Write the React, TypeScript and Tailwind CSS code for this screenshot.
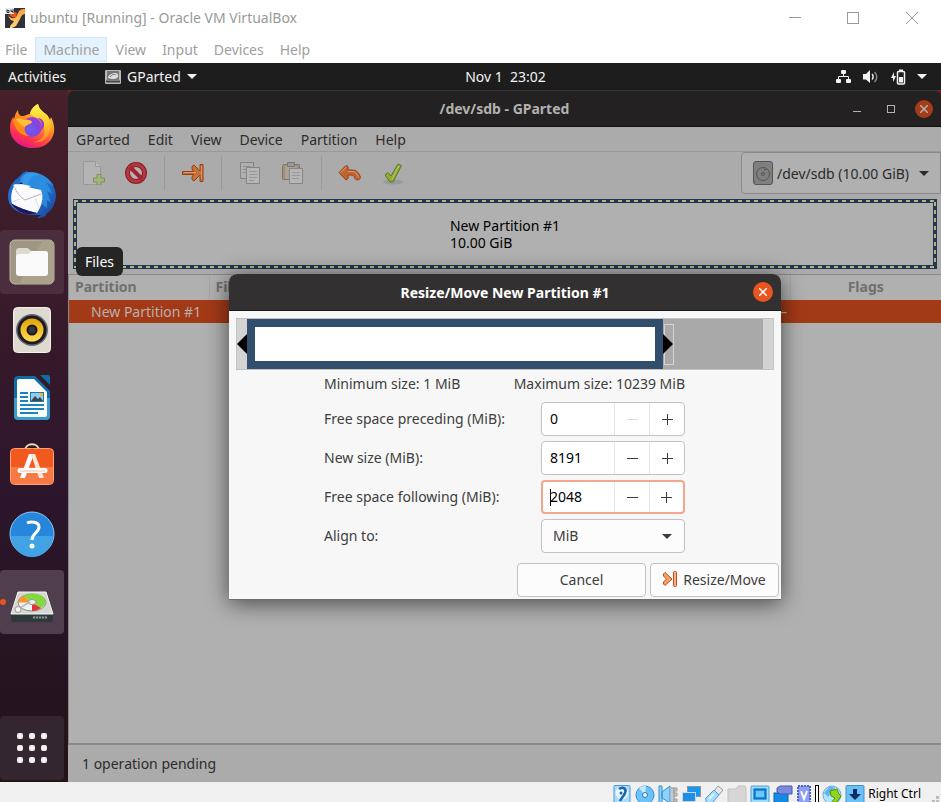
import type { ReactNode } from "react";

const SANS = "font-['Noto_Sans','Open_Sans',sans-serif]";

/* ---------- Host window ---------- */

function VirtualBoxLogo() {
  return (
    <svg width="20" height="20" viewBox="0 0 20 20" aria-hidden="true">
      <defs>
        <linearGradient id="vb" x1="0" y1="0" x2="0" y2="1">
          <stop offset="0" stopColor="#ff9a3c" />
          <stop offset="1" stopColor="#ffd978" />
        </linearGradient>
      </defs>
      <rect width="20" height="20" fill="#2f323b" />
      <path d="M3 7c3 4 5 4 8 2l3-6c2-2 4-2 6-2v5c-3 0-4 3-5 5l-4 7-4 2H5c0-4 3-4 4-7-3 0-5-3-6-6Z" fill="url(#vb)" />
      <path d="M4 6c2 3 4 4 7 3l1-4-2-1Z" fill="#f0521e" />
      <rect width="9" height="6" fill="#e9eaec" />
      <path d="M2 1.500v3h2v-2H2M6 1.500v2h2M8 1v4" stroke="#333" fill="none" />
    </svg>
  );
}

function HostTitleBar() {
  return (
    <header className="flex h-[37px] items-center bg-white pb-px pl-[5px] text-[#999]">
      <VirtualBoxLogo />
      <h1 className="ml-[5px] flex-1 text-[14px] leading-5">ubuntu [Running] - Oracle VM VirtualBox</h1>
      <div className="flex h-full">
        <button aria-label="Minimize" className="grid w-[58px] place-items-center">
          <svg width="12" height="12" stroke="#999"><path d="M0 5.500h12" /></svg>
        </button>
        <button aria-label="Maximize" className="grid w-[58px] place-items-center">
          <svg width="12" height="12" stroke="#999" fill="none"><rect x=".5" y=".5" width="11" height="11" /></svg>
        </button>
        <button aria-label="Close" className="grid w-[59px] place-items-center">
          <svg width="12" height="12" stroke="#999"><path d="M0 0l12 12M12 0L0 12" /></svg>
        </button>
      </div>
    </header>
  );
}

function HostMenu() {
  const items = ["File", "Machine", "View", "Input", "Devices", "Help"];
  return (
    <nav className="flex h-[26px] bg-white pb-px text-[14px] text-[#a0a0a0]">
      {items.map((item, i) => (
        <button
          key={item}
          className={
            i === 0
              ? "pr-[8px] pl-[5px]"
              : item === "Machine"
                ? "border border-[#cce8ff] bg-[#e5f3ff] px-[7px]"
                : "px-[8px]"
          }
        >
          {item}
        </button>
      ))}
    </nav>
  );
}

/* ---------- GNOME top panel ---------- */

function TopPanel() {
  return (
    <div className="grid h-[27px] grid-cols-3 items-center bg-[#1d1d1d] text-[14px] text-[#f2f2f2]">
      <div className="flex items-center pl-2">
        <button className="w-[97px] text-left">Activities</button>
        <button className="flex items-center gap-[6px]">
          <svg width="16" height="14" viewBox="0 0 16 14" aria-hidden="true">
            <rect width="16" height="14" rx="1" fill="#b9b9b9" />
            <rect x="2" y="1" width="12" height="9" fill="#777" />
            <path d="M3 8c0-4 9-7 10-3s-5 5-10 3Z" fill="#ddd" />
            <path d="M5 7c2-3 5-3 6-2" stroke="#777" fill="none" />
            <path d="M1 11.500h14" stroke="#444" strokeWidth="2" />
          </svg>
          GParted
          <svg width="10" height="5" fill="#f2f2f2" aria-hidden="true"><path d="M0 0h10L5 5Z" /></svg>
        </button>
      </div>
      <button className="justify-self-center pl-[70px] whitespace-pre">Nov 1  23:02</button>
      <div className="flex items-center justify-end gap-[11px] pr-[14px]">
        <svg width="16" height="14" fill="#f2f2f2" aria-label="Network">
          <rect x="5" y="0" width="5" height="4" rx="1" />
          <rect x="0" y="9" width="5" height="4" rx="1" />
          <rect x="10" y="9" width="5" height="4" rx="1" />
          <path d="M7.500 4v3M2.500 9V6.500h10V9" fill="none" stroke="#f2f2f2" />
        </svg>
        <svg width="16" height="14" fill="#f2f2f2" aria-label="Volume">
          <path d="M0 4h3l4-4v13L3 9.500H0Z" />
          <path d="M9 4c1.500 1.500 1.500 4 0 5.500" fill="none" stroke="#f2f2f2" strokeWidth="1.500" />
          <path d="M11.500 2c3 3 3 7 0 10" fill="none" stroke="#8a8a8a" strokeWidth="1.500" />
        </svg>
        <svg width="16" height="16" fill="#f2f2f2" aria-label="Battery">
          <path d="M4 3L1 9h2v4l3-6H4Z" />
          <rect x="7.500" y="2.500" width="7" height="12.500" rx="1" fill="none" stroke="#f2f2f2" strokeWidth="1.500" />
          <rect x="9" y="0.500" width="4" height="2" />
          <rect x="9" y="8" width="4" height="5.500" />
        </svg>
        <svg width="10" height="5" fill="#f2f2f2" aria-label="System menu"><path d="M0 0h10L5 5Z" /></svg>
      </div>
    </div>
  );
}

/* ---------- Dock icons ---------- */

function Firefox() {
  return (
    <svg width="48" height="48" viewBox="0 0 48 48" aria-hidden="true">
      <defs>
        <linearGradient id="fxBody" x1=".8" y1="0" x2=".3" y2="1">
          <stop offset="0" stopColor="#fff44f" />
          <stop offset=".4" stopColor="#ff9a1f" />
          <stop offset=".75" stopColor="#ff3a4a" />
          <stop offset="1" stopColor="#e3138a" />
        </linearGradient>
        <linearGradient id="fxTail" x1=".5" y1="0" x2=".6" y2="1">
          <stop offset="0" stopColor="#fff34d" />
          <stop offset=".6" stopColor="#ffc226" />
          <stop offset="1" stopColor="#ff7a2e" />
        </linearGradient>
        <radialGradient id="fxGlobe" cx=".4" cy=".6" r=".7">
          <stop offset="0" stopColor="#6a5cf5" />
          <stop offset=".6" stopColor="#8046e0" />
          <stop offset="1" stopColor="#b833d8" />
        </radialGradient>
      </defs>
      <path d="M10 8c0 3 1 5 3 6h3c2-1 4-2 6-2 1-5 4-8 8-10 1 5 5 8 9 11 1 1 2 3 3 5l1-3c3 6 5 14 1 21-4 7-11 10-19 10C12 46 2 38 2 26c0-4 1-8 3-11l1 2c1-4 2-7 4-9Z" fill="url(#fxBody)" />
      <path d="M22 12c1-5 4-8 8-10 1 5 5 8 9 11 5 6 5 16 0 22-4 5-10 6-14 5 9-1 13-7 11-15-2-7-8-9-14-13Z" fill="url(#fxTail)" />
      <circle cx="24" cy="25" r="10" fill="url(#fxGlobe)" />
      <path d="M5 18c3-4 8-3 12-1 3 1 6 1 7 3 0 2-6 3-7 5-1 3 0 6 4 9-8 0-14-6-16-16Z" fill="#ff8a16" />
      <path d="M8 17c3-1 6 0 9 1 3 0 6 0 7 2-1 2-6 2-7 5-3-1-7-4-9-8Z" fill="#ffbd3a" />
      <path d="M29 16c5 2 6 8 4 12 3-1 4-6 2-9-1-2-3-3-6-3Z" fill="#8e3ae0" />
    </svg>
  );
}

function Thunderbird() {
  return (
    <svg width="50" height="50" viewBox="0 0 50 50" aria-hidden="true">
      <defs>
        <linearGradient id="tb" x1="0" y1="0" x2="1" y2="1">
          <stop offset="0" stopColor="#1b62c4" />
          <stop offset=".5" stopColor="#2478d8" />
          <stop offset="1" stopColor="#1c3f94" />
        </linearGradient>
      </defs>
      <path d="M12 8c3-4 6-6 9-6l-2 2c14-3 30 7 30 24-1 8-5 14-10 17 1 2-3 4-9 4l4-3C17 47 1 42 1 27 1 19 6 12 12 8Z" fill="url(#tb)" />
      <path d="M20 3c12-1 22 5 27 14l-8-4 7 12-6-3 4 12-4-3v8l-5-4c2-12-2-17-17-18-5-5-2-10 2-14Z" fill="#2d92e4" opacity=".8" />
      <path d="M14 8c5-5 13-6 19-2-8 0-10 3-12 9l-10 5Z" fill="#43a8ee" opacity=".5" />
      <path d="M8 15l26 6c3 8 1 15-4 23-11-3-18-5-25-9 -2-8 0-14 3-20Z" fill="#fbfbfd" />
      <path d="M8 15c-1 6 4 12 10 16l16-6" fill="none" stroke="#aeb3bc" />
      <path d="M13 30l-8 3M28 29l4 10" stroke="#dcdfe6" />
      <path d="M4 34c8 5 14 7 26 10-9 3-20 0-26-10Z" fill="#1d1761" />
      <circle cx="14" cy="15" r="1.500" fill="#10203f" />
      <path d="M6 16l6 7 12-6-10-2Z" fill="#fff" />
    </svg>
  );
}

function Files() {
  return (
    <svg width="46" height="46" viewBox="0 0 46 46" aria-hidden="true">
      <rect x="1" y="1" width="44" height="44" rx="5" fill="#9f9783" stroke="#c2bba6" />
      <path d="M34 1h6a5 5 0 0 1 5 5v34a5 5 0 0 1-5 5H10Z" fill="#aaa28c" />
      <path d="M7 34V12a3 3 0 0 1 3-3h8c2 0 3 3 5 3h13a3 3 0 0 1 3 3v19Z" fill="#dfdad1" />
      <path d="M7 18a3 3 0 0 1 3-3h9l4-3h13a3 3 0 0 1 3 3v19a3 3 0 0 1-3 3H10a3 3 0 0 1-3-3Z" fill="#fafafa" />
    </svg>
  );
}

function Rhythmbox() {
  return (
    <svg width="38" height="46" viewBox="0 0 38 46" aria-hidden="true">
      <defs>
        <linearGradient id="rb" x1="0" y1="0" x2="0" y2="1">
          <stop offset="0" stopColor="#e0a500" />
          <stop offset="1" stopColor="#ffdc55" />
        </linearGradient>
      </defs>
      <rect x=".5" y=".5" width="37" height="45" rx="4" fill="#dfdad0" stroke="#f5f2ea" />
      <circle cx="19" cy="23" r="16" fill="#6b6b70" />
      <circle cx="19" cy="23" r="14.500" fill="#1a1b26" />
      <circle cx="19" cy="23" r="11.500" fill="url(#rb)" />
      <circle cx="19" cy="23" r="5.500" fill="#17171b" />
      <circle cx="19" cy="23" r="3.500" fill="#34353a" />
    </svg>
  );
}

function Writer() {
  return (
    <svg width="38" height="46" viewBox="0 0 38 46" aria-hidden="true">
      <path d="M5 1h17l15 15v25a4 4 0 0 1-4 4H5a4 4 0 0 1-4-4V5a4 4 0 0 1 4-4Z" fill="#0f6ca5" />
      <path d="M1 23h36v18a4 4 0 0 1-4 4H5a4 4 0 0 1-4-4Z" fill="#3a9ccb" />
      <path d="M6 4h15l13 13v23a2 2 0 0 1-2 2H6a2 2 0 0 1-2-2V6a2 2 0 0 1 2-2Z" fill="#fcfcfc" />
      <path d="M27 0h8a2 2 0 0 1 2 2v8Z" fill="#0f6ca5" />
      <path d="M7 18h8M7 22h8M7 26h8M7 30h24M7 34h24M7 38h18" stroke="#1a84bd" strokeWidth="2" />
      <rect x="17.500" y="17.500" width="13" height="9" fill="#8fcdf0" stroke="#1b79b0" />
      <path d="M18 26l4-5 3 3 2-2 3 4Z" fill="#444" />
      <rect x="27" y="18" width="3" height="3" fill="#f5b81c" />
    </svg>
  );
}

function Software() {
  return (
    <svg width="46" height="52" viewBox="0 0 46 52" aria-hidden="true">
      <path d="M16 11c0-9 14-9 14 0" fill="none" stroke="#f5dcae" strokeWidth="2" />
      <rect x="1.500" y="8.500" width="43" height="36" rx="4" fill="#f1591f" stroke="#ffa27a" />
      <path d="M2 27h42v13a4 4 0 0 1-4 4H6a4 4 0 0 1-4-4Z" fill="#f67a45" />
      <path d="M20 14h5l-9 24h-5Z" fill="#fff" />
      <path d="M22 14h4l9 24h-5Z" fill="#fde4d9" />
      <path d="M11 30.500h25" stroke="#fff" strokeWidth="5" strokeLinecap="round" />
      <path d="M11 31h25" stroke="#f6b9a2" />
    </svg>
  );
}

function Help() {
  return (
    <svg width="46" height="46" viewBox="0 0 46 46" aria-hidden="true">
      <circle cx="23" cy="23" r="22" fill="#2686db" stroke="#8ecbf4" />
      <path d="M2 25h42a21 21 0 0 1-42 0Z" fill="#41a2e4" />
      <path d="M18 12c3-1.500 12-2 12 4 0 6-7 6-7 13" fill="none" stroke="#fff" strokeWidth="3" />
      <circle cx="23" cy="35" r="2.500" fill="#fff" />
    </svg>
  );
}

function GPartedIcon() {
  return (
    <svg width="44" height="42" viewBox="0 -9 44 42" aria-hidden="true">
      <path d="M1 24h42v5a3 3 0 0 1-3 3H4a3 3 0 0 1-3-3Z" fill="#2e3a3a" />
      <path d="M8 2h28l7 22H1Z" fill="#d6d6d3" stroke="#f6f6f4" />
      <ellipse cx="22" cy="12.500" rx="14" ry="8.500" fill="#f2f2f2" stroke="#8c8c8c" />
      <path d="M22 12.500L13 6c7-4 22-3 22.500 6 0 3-2 4-4.500 6Z" fill="#82d93c" />
      <path d="M22 12.500L13 6c-3 2-5 4-5 6.500Z" fill="#f5952b" />
      <path d="M22 12.500l9 5.500c-3 2-6 3-9 3Z" fill="#e33434" />
      <ellipse cx="22" cy="12" rx="4" ry="2.500" fill="#eee" stroke="#9a9a9a" />
      <path d="M8 19l12-7" stroke="#bbb" strokeWidth="2" />
      <circle cx="8" cy="19.500" r="3" fill="#f5f5f5" stroke="#999" />
      <path d="M23 27.500h15" stroke="#8ea0a0" strokeWidth="2" strokeDasharray="2 1" />
    </svg>
  );
}

function DockItem({ label, bg = "", children }: { label: string; bg?: string; children: ReactNode }) {
  return (
    <button aria-label={label} className={`relative grid h-16 w-16 place-items-center rounded-[4px] ${bg}`}>
      {children}
    </button>
  );
}

function Dock() {
  return (
    <aside className="flex w-[68px] shrink-0 flex-col gap-1 bg-linear-to-b from-[#46202a] via-[#2c152b] via-60% to-[#221419] pt-1 pb-[2px]">
      <DockItem label="Firefox"><Firefox /></DockItem>
      <DockItem label="Thunderbird"><Thunderbird /></DockItem>
      <DockItem label="Files" bg="bg-[#4b2e3d]">
        <Files />
        <span className="absolute top-[17px] left-[76px] z-20 h-[29px] w-[47px] rounded-[6px] bg-[#252525] text-center text-[14px] leading-[29px] text-white">
          Files
        </span>
      </DockItem>
      <DockItem label="Rhythmbox"><Rhythmbox /></DockItem>
      <DockItem label="LibreOffice Writer"><Writer /></DockItem>
      <DockItem label="Ubuntu Software"><Software /></DockItem>
      <DockItem label="Help"><Help /></DockItem>
      <DockItem label="GParted" bg="bg-[#503e4e]">
        <GPartedIcon />
        <span className="absolute top-[29px] left-0 h-[6px] w-[6px] rounded-full bg-[#e95420]" />
      </DockItem>
      <button aria-label="Show Applications" className="mt-auto grid h-16 w-16 place-items-center rounded-[4px] bg-[#34262e]">
        <span className="grid grid-cols-3 gap-[6px]">
          {Array.from({ length: 9 }, (_, i) => (
            <span key={i} className="h-[6px] w-[6px] rounded-[2px] bg-[#f2f0f0]" />
          ))}
        </span>
      </button>
    </aside>
  );
}

/* ---------- GParted window ---------- */

function CloseX({ color }: { color: string }) {
  return (
    <svg width="8" height="8" stroke={color} strokeWidth="1.500" aria-hidden="true"><path d="M0 0l8 8M8 0L0 8" /></svg>
  );
}

function MainTitleBar() {
  return (
    <div className="bg-[#8a1a1c]">
      <div className="grid h-[37px] grid-cols-[1fr_auto_1fr] items-center rounded-t-[6px] border-t border-b border-t-[#353334] border-b-[#120f10] bg-[#242122] text-[#b3b1ae]">
        <span />
        <h2 className="text-[14px] font-bold">/dev/sdb - GParted</h2>
        <div className="flex items-center justify-end gap-[14px] pr-2">
          <button aria-label="Minimize" className="grid h-5 w-5 place-items-center">
            <svg width="8" height="8" stroke="#b3b1ae"><path d="M0 6.500h8" /></svg>
          </button>
          <button aria-label="Maximize" className="grid h-5 w-5 place-items-center">
            <svg width="8" height="8" stroke="#b3b1ae" fill="none"><rect x=".5" y=".5" width="7" height="7" /></svg>
          </button>
          <button aria-label="Close" className="grid h-[18px] w-[18px] place-items-center rounded-full bg-[#a53c18]">
            <CloseX color="#b3b1ae" />
          </button>
        </div>
      </div>
    </div>
  );
}

function MainMenu() {
  return (
    <nav className="flex h-[25px] items-center gap-[18px] border-b border-[#999] pl-2 text-[14px] text-[#2b2b2b]">
      {["GParted", "Edit", "View", "Device", "Partition", "Help"].map((item) => (
        <button key={item}>{item}</button>
      ))}
    </nav>
  );
}

function Separator() {
  return (
    <span className="flex w-[13px] justify-center"><span className="h-[34px] w-px bg-[#999]" /></span>
  );
}

function Tool({ label, children }: { label: string; children: ReactNode }) {
  return (
    <button aria-label={label} className="grid w-[42px] place-items-center">
      <svg width="24" height="24" viewBox="0 0 24 24" aria-hidden="true">{children}</svg>
    </button>
  );
}

function Toolbar() {
  return (
    <div className="flex h-[47px] justify-between pl-1">
      <div className="flex h-[42px] items-center gap-px">
        <Tool label="New">
          <path d="M2.500.5h12l5 5v18h-17Z" fill="#b4b4b4" stroke="#989898" />
          <path d="M14.500.5v5h5" fill="#bdbdbd" stroke="#989898" />
          <path d="M16 13.500h4v3.500h3.500v4H20v3h-4v-3h-3.500v-4H16Z" fill="#a4b57c" stroke="#7d915a" />
        </Tool>
        <Tool label="Delete">
          <circle cx="12" cy="12" r="8.500" fill="#b5b5b5" stroke="#8c1a26" strokeWidth="5" />
          <circle cx="12" cy="12" r="8.500" fill="none" stroke="#b03a40" strokeWidth="3" />
          <path d="M6 6l12 12" stroke="#a3232f" strokeWidth="4" />
        </Tool>
        <Separator />
        <Tool label="Resize/Move">
          <path d="M1.500 10.500h11L11 8V5.500L13 4l6 6V3.500h3v17h-3V14l-6 6-2-1.500V16l1.500-2.500h-11Z" fill="#c5713a" stroke="#9c3d12" strokeLinejoin="round" />
          <path d="M3 11.500h12M20.500 5v13" stroke="#dc9a63" />
        </Tool>
        <Separator />
        <Tool label="Copy">
          <path d="M2.500 1.500h13v16h-13Z" fill="#b0b0b0" stroke="#858585" />
          <path d="M5 5.500h8M5 8.500h8M5 11.500h4" stroke="#8f8f8f" />
          <path d="M8.500 6.500h13v16h-13Z" fill="#b6b6b6" stroke="#858585" />
          <path d="M11 10.500h8M11 13.500h8M11 16.500h8M11 19.500h5" stroke="#979797" />
        </Tool>
        <Tool label="Paste">
          <rect x="1.500" y="3.500" width="17" height="15" rx="1" fill="#a08f78" stroke="#857660" />
          <rect x="4" y="5" width="12" height="13" fill="#aaa197" />
          <path d="M6.500 1.500h7v4h-7Z" fill="#989898" stroke="#767676" />
          <path d="M8.500 7.500h13v15h-13Z" fill="#b6b6b6" stroke="#858585" />
          <path d="M11 11.500h8M11 14.500h8M11 17.500h7" stroke="#979797" />
        </Tool>
        <Separator />
        <Tool label="Undo">
          <path d="M1 11.500l7-7 2 1v3.500h4c5 0 7 3 8.500 7.500-1 3-4 3-5.500 1-1-3-2-3.500-4-3.500h-3v3.500l-2 1.500Z" fill="#bf6433" stroke="#9c3d12" strokeLinejoin="round" />
          <path d="M2.500 11.500l6-5.500M10 10.500h4c3 0 5 2 6.500 6" stroke="#dc9a63" fill="none" />
        </Tool>
        <Tool label="Apply">
          <ellipse cx="12" cy="21" rx="10" ry="2.500" fill="#999" />
          <path d="M4 14l3-2.500 3 3.500L17 3l3.500 1.500L12 21H9Z" fill="#93a936" stroke="#587a1c" strokeLinejoin="round" />
          <path d="M18 4.500l-7 14" stroke="#b4c865" />
        </Tool>
      </div>
      <label className="flex h-[42px] w-[200px] items-center rounded-l-[4px] border border-[#898989] bg-[#b0b0b0] pl-[11px] text-[#2b2b2b]">
        <svg width="20" height="24" viewBox="0 0 20 24" className="shrink-0" aria-hidden="true">
          <rect x=".5" y=".5" width="19" height="23" rx="2.500" fill="#7f7f7f" stroke="#555" />
          <circle cx="10" cy="13" r="6.500" fill="none" stroke="#555" />
          <circle cx="10" cy="13" r="1.500" fill="none" stroke="#555" />
          <path d="M14 8l-3 1M2 20v1" stroke="#555" />
        </svg>
        <select aria-label="Device" className="ml-1 h-7 w-[138px] appearance-none bg-transparent text-[14px]">
          <option>/dev/sdb (10.00 GiB)</option>
        </select>
        <svg width="10" height="5" fill="#2b2b2b" className="ml-1 shrink-0" aria-hidden="true"><path d="M0 0h10L5 5Z" /></svg>
      </label>
    </div>
  );
}

/* Selected partition, outlined by marching dashes on a navy frame. */
function PartitionGraph() {
  return (
    <div className="mr-1 ml-[5px] bg-[#22374f] p-px">
      <div className="bg-[repeating-linear-gradient(90deg,#b0b383_0_4px,#22374f_4px_8px)] py-[2px]">
        <div className="bg-[repeating-linear-gradient(180deg,#b0b383_0_4px,#22374f_4px_8px)] px-[2px]">
          <div className="bg-[#22374f] p-px">
            <div className="flex h-[62px] items-center justify-center bg-[#b0b0b0] text-[14px] leading-[17px] text-black">
              <p>New Partition #1<br />10.00 GiB</p>
            </div>
          </div>
        </div>
      </div>
    </div>
  );
}

function PartitionTable() {
  return (
    <div className="mt-[5px] flex-1 border-t border-b-2 border-l border-[#888a88] bg-[#b0b0b0]">
      <table className="w-full table-fixed border-collapse text-left text-[14px]">
        <thead>
          <tr className="h-[25px] text-[#707070]">
            <th className="w-[140px] border-r border-[#a6a6a6] pb-[2px] pl-[6px]">Partition</th>
            <th className="border-r border-[#a6a6a6] pb-[2px] pl-[6px]">File System</th>
            <th className="w-[151px] pb-[2px] text-center">Flags</th>
          </tr>
        </thead>
        <tbody>
          <tr className="h-[23px] bg-[#a23a17] text-[#b9b0ac]">
            <td className="pl-[22px] whitespace-nowrap">New Partition #1</td>
            <td className="pr-[3px] text-right">—</td>
            <td />
          </tr>
        </tbody>
      </table>
    </div>
  );
}

/* ---------- Resize dialog ---------- */

function PartitionSlider() {
  return (
    <div className="mx-[7px] flex h-[52px] border border-[#c3c3c3] bg-[#d3d3d3]">
      <span className="flex w-[10px] items-center">
        <svg width="10" height="20" aria-hidden="true"><path d="M10 0v20L0 10Z" /></svg>
      </span>
      <span className="flex-1 border-8 border-[#314e6c] bg-white" />
      <span className="flex w-[100px] items-center bg-[#a9a9a9] pl-px">
        <span className="flex h-[41px] w-[10px] items-center border border-[#d3d3d3]">
          <svg width="10" height="20" className="-ml-[2px] shrink-0" aria-hidden="true"><path d="M0 0v20L10 10Z" /></svg>
        </span>
      </span>
      <span className="w-[10px]" />
    </div>
  );
}

function SpinRow({ id, label, value, focused = false, atMin = false }: {
  id: string; label: string; value: string; focused?: boolean; atMin?: boolean;
}) {
  return (
    <div className="flex items-center justify-between">
      <label htmlFor={id} className="pb-[2px]">{label}</label>
      <div className={`flex h-[34px] w-[144px] overflow-hidden rounded-[4px] bg-white ${focused ? "border-2 border-[#f4a78d]" : "border border-[#c2c2c2]"}`}>
        <div className={`flex flex-1 items-center ${focused ? "pl-[7px]" : "pl-2"}`}>
          {focused && <span className="-mr-px h-[17px] w-px bg-black" />}
          <input id={id} defaultValue={value} className="w-[60px] bg-transparent pb-[2px] text-black outline-none" />
        </div>
        <button aria-label={`Decrease ${label}`} disabled={atMin} className="grid w-[35px] place-items-center border-l border-[#e6e6e6]">
          <svg width="11" height="11" stroke={atMin ? "#d9d9d9" : "#3d3d3d"}><path d="M0 5.500h11" /></svg>
        </button>
        <button aria-label={`Increase ${label}`} className={`grid place-items-center border-l border-[#e6e6e6] ${focused ? "w-[34px]" : "w-[35px]"}`}>
          <svg width="11" height="11" stroke="#3d3d3d"><path d="M0 5.500h11M5.500 0v11" /></svg>
        </button>
      </div>
    </div>
  );
}

function ResizeDialog() {
  return (
    <div role="dialog" aria-label="Resize/Move New Partition #1" className="w-[552px] rounded-t-[8px] border-b border-[#6d6d6d] bg-[#f7f7f7] text-[14px] text-[#3d3d3d] shadow-[0_3px_22px_rgba(0,0,0,0.6)]">
      <div className="grid h-[37px] grid-cols-[1fr_auto_1fr] items-center rounded-t-[8px] border-b border-[#1c1a1b] bg-[#333031] text-white">
        <span />
        <h2 className="font-bold">Resize/Move New Partition #1</h2>
        <button aria-label="Close" className="mr-2 grid h-[20px] w-[20px] place-items-center justify-self-end rounded-full bg-[#e95420]">
          <CloseX color="#fff" />
        </button>
      </div>
      <div className="pt-[7px]">
        <PartitionSlider />
        <div className="ml-[95px] flex w-[361px] flex-col gap-[5px]">
          <div className="flex h-[27px] items-center justify-between">
            <span>Minimum size: 1 MiB</span>
            <span>Maximum size: 10239 MiB</span>
          </div>
          <SpinRow id="preceding" label="Free space preceding (MiB):" value="0" atMin />
          <SpinRow id="size" label="New size (MiB):" value="8191" />
          <SpinRow id="following" label="Free space following (MiB):" value="2048" focused />
          <div className="flex items-center justify-between">
            <label htmlFor="align" className="pb-[2px]">Align to:</label>
            <div className="flex h-[34px] w-[144px] items-center rounded-[4px] border border-[#c2c2c2] bg-[#fcfcfc] pr-3 pl-[11px]">
              <select id="align" className="flex-1 appearance-none bg-transparent pb-[2px]">
                <option>MiB</option>
              </select>
              <svg width="10" height="5" fill="#3d3d3d" aria-hidden="true"><path d="M0 0h10L5 5Z" /></svg>
            </div>
          </div>
        </div>
        <div className="mt-[10px] flex justify-end gap-1 pr-[2px] pb-[2px]">
          <button className="h-[34px] w-[129px] rounded-[4px] border border-[#c2c2c2] bg-[#fcfcfc] pb-[2px]">Cancel</button>
          <button className="flex h-[34px] w-[129px] items-center justify-center gap-1 rounded-[4px] border border-[#c2c2c2] bg-[#fcfcfc] pb-[2px]">
            <svg width="16" height="16" viewBox="0 0 16 16" aria-hidden="true">
              <path d="M2 1.500l7 6.500-7 6.500-1.500-1.500V11l3-3-3-3V3Z" fill="#f5a26a" stroke="#c8481c" strokeLinejoin="round" />
              <rect x="10.500" y=".5" width="3" height="15" rx="1" fill="#f5b27e" stroke="#c8481c" />
            </svg>
            Resize/Move
          </button>
        </div>
      </div>
    </div>
  );
}

/* ---------- VirtualBox status bar ---------- */

function Indicator({ label, narrow = false, children }: { label: string; narrow?: boolean; children: ReactNode }) {
  return (
    <svg width={narrow ? 16 : 20} height="20" viewBox={narrow ? "2 0 16 20" : "0 0 20 20"} className="shrink-0" aria-label={label}>
      {children}
    </svg>
  );
}

function StatusBar() {
  return (
    <footer className="flex h-5 items-start justify-end gap-[3px] overflow-hidden bg-[#f0f0f0] pt-[3px] text-black">
      <Indicator label="Hard disk">
        <rect x="2" y=".5" width="16" height="18" rx="1" fill="#a9dcff" stroke="#4a9adb" />
        <circle cx="10" cy="8" r="6.500" fill="#e6f5ff" />
        <path d="M7 4c4-3 8 0 6 4-1 3-3 4-5 8" fill="none" stroke="#1c63ae" strokeWidth="2.500" />
        <circle cx="9" cy="8" r="1.500" fill="#1c63ae" />
      </Indicator>
      <Indicator label="Optical drive">
        <circle cx="10" cy="10" r="9" fill="#6cc3fa" stroke="#2d8fd8" />
        <path d="M10 10L4 3a9 9 0 0 1 7-2Z" fill="#c8ebff" />
        <circle cx="10" cy="10" r="2.500" fill="#e8f6ff" stroke="#2c75ad" />
      </Indicator>
      <Indicator label="Audio">
        <path d="M13 3h3v14h-3M15 3h4v3h-4M15 8h4v3h-4M15 14h4v3h-4" fill="#c9c9c9" stroke="#999" />
        <path d="M1 1h3v17H1ZM4 7l8-6v17l-8-5Z" fill="#8fd2fc" stroke="#318fd0" />
      </Indicator>
      <Indicator label="Network">
        <rect x="6.500" y="1.500" width="13" height="10" fill="#1996f0" stroke="#8a969e" />
        <rect x="1.500" y="7.500" width="13" height="9" fill="#1e8fe8" stroke="#d0d6da" />
        <path d="M4 18h8" stroke="#777" strokeWidth="2" />
      </Indicator>
      <Indicator label="USB">
        <path d="M14 1l5 4-4 5-5-4Z" fill="#e8e8e8" stroke="#999" />
        <path d="M10 5l5 5-7 8c-4 2-7-1-6-5Z" fill="#a8dcff" stroke="#4a9adb" />
        <path d="M5 14l5-5" stroke="#e6f5ff" strokeWidth="2" />
      </Indicator>
      <Indicator label="Shared folders">
        <path d="M1 18V4h8l2-3h7l1 2v15Z" fill="#d6d6d6" stroke="#c2c2c2" />
      </Indicator>
      <Indicator label="Display">
        <rect x="1" y="1" width="18" height="18" rx="1" fill="#9bdcff" stroke="#559ed4" />
        <rect x="4" y="4" width="12" height="10" fill="#178ee9" stroke="#075a9e" />
        <rect x="6" y="6" width="8" height="6" fill="#6cc7ff" />
      </Indicator>
      <Indicator label="Recording">
        <rect x="1" y="8" width="14" height="12" fill="#168be5" stroke="#0762b0" />
        <path d="M7 1h12v8H7L4 7V3Z" fill="#7a8ae0" stroke="#4b58b5" />
      </Indicator>
      <Indicator label="Processor" narrow>
        <rect x="4" y="1" width="12" height="18" fill="#8fa0ee" stroke="#4f62c8" strokeWidth="2" strokeDasharray="2 1" />
        <path d="M7 6l3 8 3-8" fill="none" stroke="#fff" strokeWidth="2" />
      </Indicator>
      <span className="h-[18px] w-1 shrink-0 border border-black bg-white" />
      <Indicator label="Mouse integration">
        <circle cx="10" cy="10" r="9" fill="#b4e4ff" stroke="#6aaed6" />
        <path d="M2 8l6-7 5 2-7 9Z" fill="#5fb6ee" />
        <path d="M8 6l7-2 2 5 2 2-4 6-6 1 4-5-4-2Z" fill="#8fd51e" stroke="#578f12" />
      </Indicator>
      <Indicator label="Keyboard capture">
        <rect x="1" y=".5" width="18" height="18" rx="1" fill="#6dc0f5" stroke="#3f92cc" />
        <path d="M8 4h4v5h4l-6 6-6-6h4Z" fill="#0d2f63" />
      </Indicator>
      <span className="text-[12px] leading-[17px]">Right Ctrl</span>
      <svg width="17" height="17" fill="#bdbdbd" className="shrink-0" aria-hidden="true">
        <path d="M12 11h3v3h-3ZM8 15h3v2H8ZM12 15h3v2h-3Z" />
      </svg>
    </footer>
  );
}

export default function App() {
  return (
    <div className={`flex min-h-screen flex-col ${SANS}`}>
      <HostTitleBar />
      <HostMenu />
      <TopPanel />
      <div className="flex flex-1">
        <Dock />
        <main className="relative flex min-w-0 flex-1 flex-col bg-[#ababab]">
          <MainTitleBar />
          <MainMenu />
          <Toolbar />
          <PartitionGraph />
          <PartitionTable />
          <p className="h-[37px] pl-[14px] text-[14px] leading-[37px] text-[#2b2b2b]">1 operation pending</p>
          <div className="absolute inset-0 z-10 flex items-center justify-center pt-[2px] pl-px">
            <ResizeDialog />
          </div>
        </main>
      </div>
      <StatusBar />
    </div>
  );
}
